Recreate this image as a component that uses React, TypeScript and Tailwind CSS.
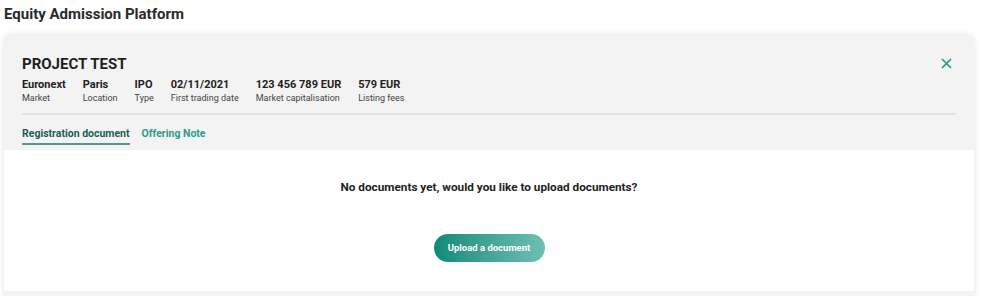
import React from "react";

export default function App() {
  const cols = [
    { v: "Euronext", l: "Market" },
    { v: "Paris", l: "Location" },
    { v: "IPO", l: "Type" },
    { v: "02/11/2021", l: "First trading date" },
    { v: "123 456 789 EUR", l: "Market capitalisation" },
    { v: "579 EUR", l: "Listing fees" },
  ];
  return (
    <div
      className="w-[982px] h-[296px] overflow-hidden bg-white text-[#222]"
      style={{ fontFamily: "Roboto, 'Noto Sans', sans-serif" }}
    >
      <div className="px-[4px] pt-[3px] h-[35px] text-[15px] font-bold leading-[22px] text-[#2a2a2a]">
        Equity Admission Platform
      </div>
      <div className="mx-[4px] mr-[8px] rounded-[8px] bg-[#f3f3f3] shadow-[0_0_6px_rgba(0,0,0,0.12)] pb-[10px]">
        <div className="px-[18px] pt-[19px]">
          <div className="flex justify-between items-start">
            <div>
              <div className="text-[15px] font-bold leading-[20px] text-[#1f1f1f]">PROJECT TEST</div>
              <div className="mt-[4px] flex gap-[17px]">
                {cols.map((c) => (
                  <div key={c.l} className="flex flex-col">
                    <span className="text-[11px] font-bold leading-[14px] text-[#222]">{c.v}</span>
                    <span className="text-[9px] leading-[13px] text-[#444]">{c.l}</span>
                  </div>
                ))}
              </div>
            </div>
            <svg className="mt-[4px] mr-[4px]" width="11" height="11" viewBox="0 0 11 11">
              <path d="M1 1 L10 10 M10 1 L1 10" stroke="#1d9686" strokeWidth="1.6" />
            </svg>
          </div>
          <div className="mt-[8px] h-[2px] bg-[#e2e2e2]" />
          <div className="flex gap-[12px] pt-[11px]">
            <div className="flex flex-col">
              <span className="text-[10.5px] font-bold leading-[15px] text-[#1b5f5a]">Registration document</span>
              <span className="mt-[2px] h-[2px] bg-[#4d9a94]" />
            </div>
            <span className="text-[10.5px] font-bold leading-[15px] text-[#2f9a8d]">Offering Note</span>
          </div>
        </div>
        <div className="mt-[5px] bg-white h-[141px] flex flex-col items-center">
          <div className="mt-[29px] text-[11.75px] font-bold leading-[16px] text-[#222]">
            No documents yet, would you like to upload documents?
          </div>
          <button className="mt-[39px] w-[111px] h-[28px] rounded-full bg-gradient-to-r from-[#0b8a78] to-[#6cc0b2] text-white text-[9.5px] font-bold">
            Upload a document
          </button>
        </div>
      </div>
    </div>
  );
}
